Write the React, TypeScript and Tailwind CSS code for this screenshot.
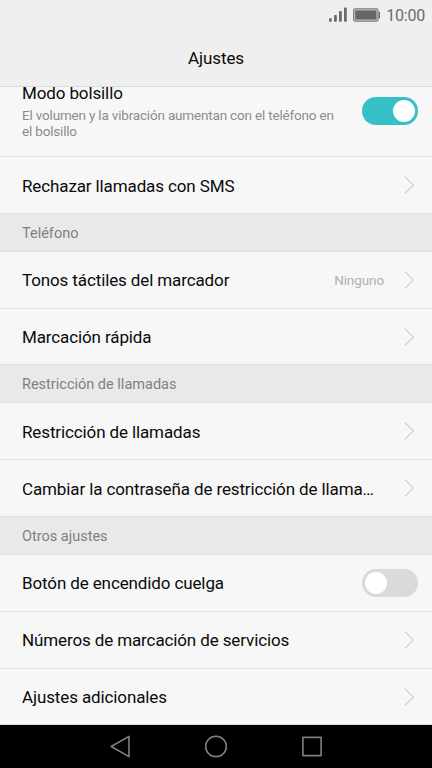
import React from 'react';

interface RowProps {
  label: string;
  value?: string;
  className?: string;
  labelClassName?: string;
  children?: React.ReactNode;
}

const Chevron: React.FC = () => (
  <svg className="mr-[17px] h-[18px] w-[11px] shrink-0" viewBox="0 0 11 18" fill="none" stroke="#b8b8b8" strokeWidth="1">
    <path d="M0.9 0.8 9.5 9 0.9 17.2" />
  </svg>
);

const Toggle: React.FC<{ on?: boolean }> = ({ on }) => (
  <button
    role="switch"
    aria-checked={!!on}
    className={`mr-[14px] flex h-7 w-14 shrink-0 items-center rounded-full px-[3px] ${
      on ? 'justify-end bg-[#36c0c5]' : 'justify-start bg-[#dadada]'
    }`}
  >
    <span className="h-[22px] w-[22px] rounded-full bg-white" />
  </button>
);

const Row: React.FC<RowProps> = ({ label, value, className = 'h-[57px]', labelClassName = '', children }) => (
  <li className={`flex items-center border-b border-[#e2e2e2] pl-[22px] ${className}`}>
    <span className={`whitespace-nowrap text-[17px] leading-6 tracking-[-0.12px] text-[#0a0a0a] ${labelClassName}`}>
      {label}
    </span>
    <span className="ml-auto mr-5 text-[13.5px] tracking-[-0.1px] text-[#b0b0b0]">{value}</span>
    {children ?? <Chevron />}
  </li>
);

const SectionTitle: React.FC<{ title: string }> = ({ title }) => (
  <li className="flex h-[38px] items-center border-b border-[#e0e0e0] bg-[#e9e9e9] pl-[22px] pt-0.5 text-[14.5px] text-[#808080]">
    {title}
  </li>
);

const StatusBar: React.FC = () => (
  <div className="flex h-[30px] items-center justify-end pr-[7px] text-[#6b6b6b]">
    <svg className="h-4 w-[18px]" viewBox="0 0 18 16" fill="currentColor">
      <rect x="0" y="11.3" width="2.8" height="3.4" rx="0.7" />
      <rect x="5" y="8" width="2.8" height="6.7" rx="0.7" />
      <rect x="10" y="4" width="2.8" height="10.7" rx="0.7" />
      <rect x="15" y="0.4" width="2.8" height="14.3" rx="0.7" />
    </svg>
    <svg className="ml-[6px] h-4 w-[28px]" viewBox="0 0 28 16">
      <rect x="0.5" y="1.7" width="24.6" height="12.6" rx="1.2" fill="#b0b0b0" stroke="#858585" />
      <rect x="2.3" y="3.6" width="21" height="8.8" fill="#666" />
      <path d="M25.6 4.8h1.4v6.4h-1.4z" fill="#6b6b6b" />
    </svg>
    <span className="ml-[5px] pt-px text-[16px] leading-none tracking-[-0.2px]">10:00</span>
  </div>
);

const NavBar: React.FC = () => (
  <nav className="flex h-[43px] items-center justify-center gap-[72px] bg-black text-[#808080]">
    <svg className="h-6 w-6" viewBox="0 0 24 24" fill="none" stroke="currentColor" strokeWidth="1.6" strokeLinejoin="round">
      <path d="M3.2 11.5 21 1.4V21.6Z" />
    </svg>
    <svg className="h-6 w-6" viewBox="0 0 24 24" fill="none" stroke="currentColor" strokeWidth="1.6">
      <circle cx="12" cy="11.5" r="10.3" />
    </svg>
    <svg className="h-6 w-6" viewBox="0 0 24 24" fill="none" stroke="currentColor" strokeWidth="1.6" strokeLinejoin="round">
      <path d="M2.9 2.4h18.2v18.2H2.9z" />
    </svg>
  </nav>
);

export default function App() {
  return (
    <div className="flex h-[768px] w-[432px] flex-col overflow-hidden bg-[#f7f7f7] font-['Roboto',sans-serif]">
      <header className="h-[87px] shrink-0 border-b border-[#dadada] bg-[#efefef]">
        <StatusBar />
        <h1 className="pt-4 text-center text-[17px] leading-6 tracking-[-0.1px] text-[#0a0a0a]">Ajustes</h1>
      </header>
      <ul className="h-[638px] shrink-0">
        <li className="flex h-[70px] items-start justify-between border-b border-[#e2e2e2] pl-[22px]">
          <div className="w-[316px]">
            <p className="text-[17px] leading-[12px] tracking-[-0.12px] text-[#0a0a0a]">Modo bolsillo</p>
            <p className="mt-[9px] text-[13.5px] leading-[15.5px] tracking-[-0.18px] text-[#8c8c8c]">
              El volumen y la vibración aumentan con el teléfono en el bolsillo
            </p>
          </div>
          <div className="pt-[10px]">
            <Toggle on />
          </div>
        </li>
        <Row label="Rechazar llamadas con SMS" labelClassName="pt-0.5" />
        <SectionTitle title="Teléfono" />
        <Row label="Tonos táctiles del marcador" value="Ninguno" />
        <Row label="Marcación rápida" className="h-[56px]" />
        <SectionTitle title="Restricción de llamadas" />
        <Row label="Restricción de llamadas" labelClassName="pt-0.5" />
        <Row label="Cambiar la contraseña de restricción de llama…" labelClassName="pt-0.5" />
        <SectionTitle title="Otros ajustes" />
        <Row label="Botón de encendido cuelga">
          <Toggle />
        </Row>
        <Row label="Números de marcación de servicios" />
        <Row label="Ajustes adicionales" className="h-[56px]" />
      </ul>
      <NavBar />
    </div>
  );
}
